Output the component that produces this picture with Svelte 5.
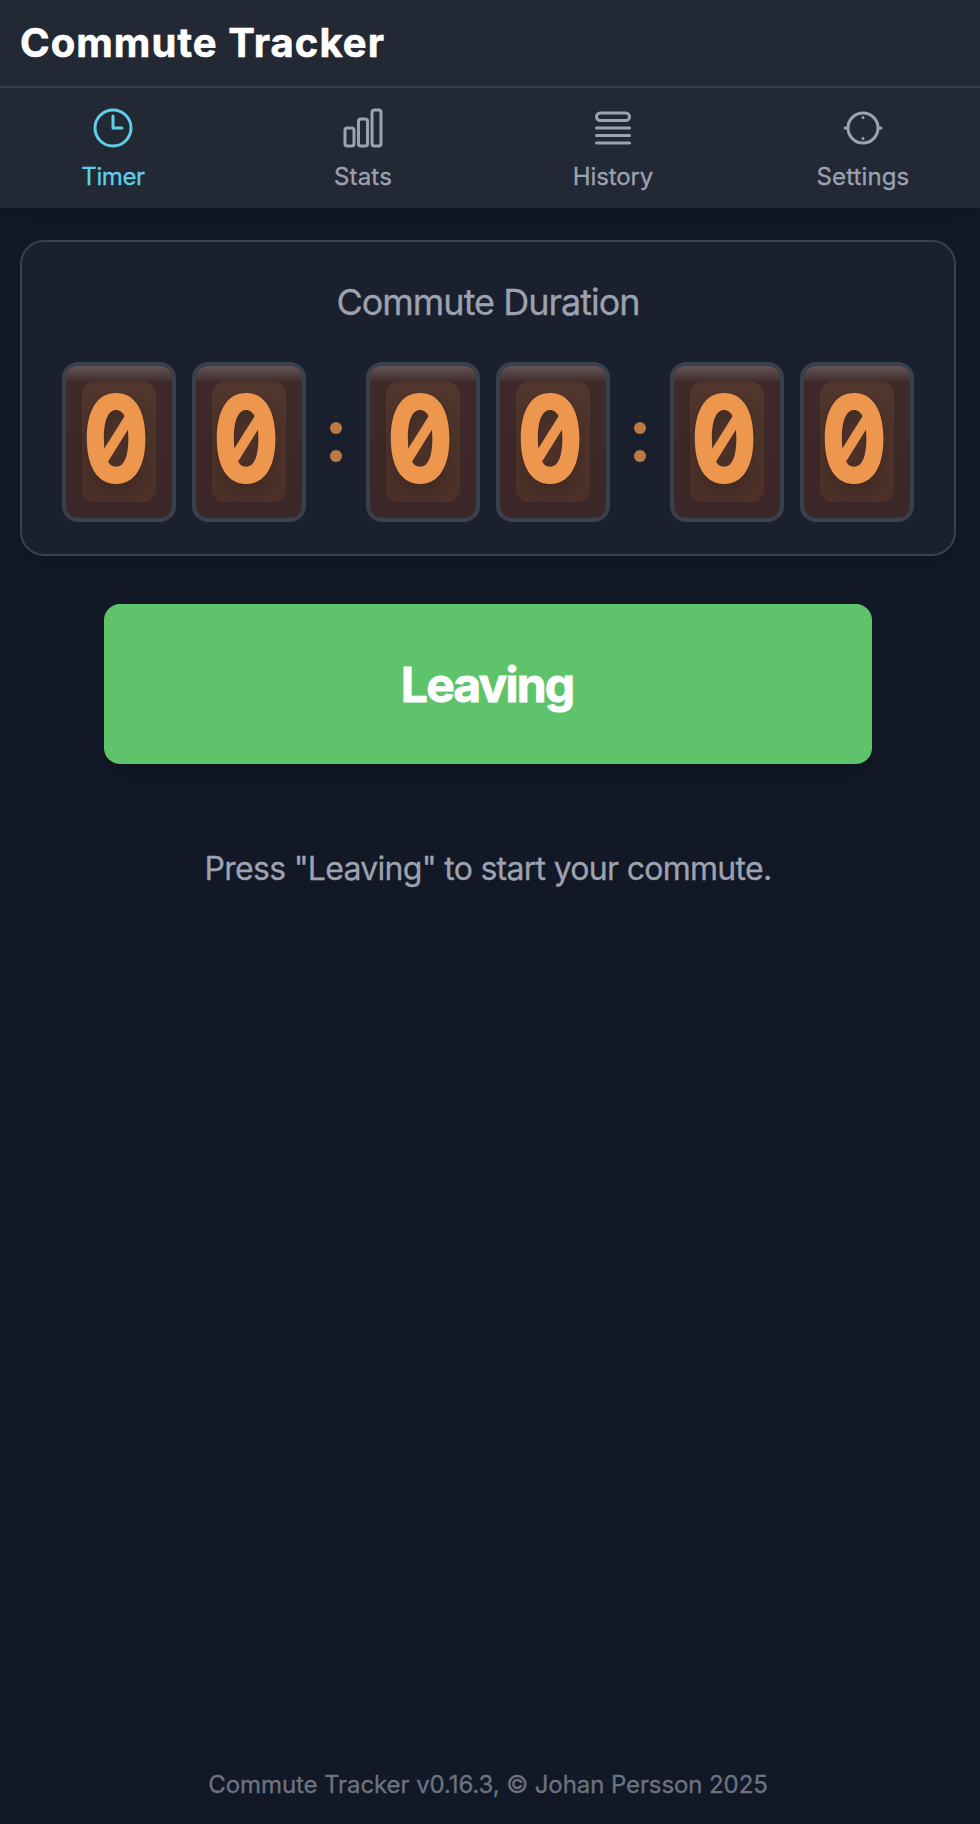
<script>
  const tabs = [
    { name: 'Timer', ls: -0.4, active: true, d: 'M12 6v6h4.5m4.5 0a9 9 0 1 1-18 0 9 9 0 0 1 18 0z' },
    { name: 'Stats', ls: 0.2, d: 'M3 13.125C3 12.504 3.504 12 4.125 12h2.25c.621 0 1.125.504 1.125 1.125v6.75C7.5 20.496 6.996 21 6.375 21h-2.25A1.125 1.125 0 0 1 3 19.875v-6.75zM9.75 8.625c0-.621.504-1.125 1.125-1.125h2.25c.621 0 1.125.504 1.125 1.125v11.25c0 .621-.504 1.125-1.125 1.125h-2.25a1.125 1.125 0 0 1-1.125-1.125V8.625zM16.5 4.125c0-.621.504-1.125 1.125-1.125h2.25C20.496 3 21 3.504 21 4.125v15.75c0 .621-.504 1.125-1.125 1.125h-2.25a1.125 1.125 0 0 1-1.125-1.125V4.125z' },
    { name: 'History', ls: -0.1, d: 'M3.75 12h16.5m-16.5 3.75h16.5M3.75 19.5h16.5M5.625 4.5h12.75a1.875 1.875 0 0 1 0 3.75H5.625a1.875 1.875 0 0 1 0-3.75z' },
    { name: 'Settings', ls: 0.12, d: 'M4.5 12a7.5 7.5 0 0 0 15 0a7.5 7.5 0 1 0-15 0H3m16.5 0H21M12 6.75v.01M12 17.25v.01' }
  ];
  const groups = [['0', '0'], ['0', '0'], ['0', '0']];
</script>

<div class="page">
  <header><h1>Commute Tracker</h1></header>
  <nav>
    {#each tabs as t}
      <div class="tab" class:active={t.active}>
        <svg viewBox="0 0 24 24"><path d={t.d} /></svg>
        <span style="letter-spacing: {t.ls}px">{t.name}</span>
      </div>
    {/each}
  </nav>
  <main>
    <section class="card">
      <h2>Commute Duration</h2>
      <div class="clock">
        {#each groups as g, i}
          {#if i > 0}<div class="colon"><i></i><i></i></div>{/if}
          <div class="pair">
            {#each g as d}
              <div class="tile"><div class="pane" class:slashed={d === '0'}><span class="num">{d}</span></div></div>
            {/each}
          </div>
        {/each}
      </div>
    </section>
    <button class="go">Leaving</button>
    <p class="hint">Press "Leaving" to start your commute.</p>
  </main>
  <footer class="foot">Commute Tracker v0.16.3, © Johan Persson 2025</footer>
</div>

<style>
  :global(body) { margin: 0; background: #121825; overflow: hidden; }
  .page {
    width: 976px; height: 1824px; display: flex; flex-direction: column;
    font-family: Inter, sans-serif; color: #9ca2af; -webkit-text-stroke: .3px currentColor;
  }
  header, nav { width: 980px; box-sizing: border-box; background: #222834; }
  header { height: 88px; flex: none; border-bottom: 2px solid #3a404d; padding: 19px 20px 0; }
  h1 { margin: 0; width: max-content; font-size: 40px; line-height: 48px; font-weight: 700; color: #fff; letter-spacing: 1.08px; -webkit-text-stroke-width: .6px; }
  nav { height: 120px; flex: none; display: flex; justify-content: center; padding-right: 4px; box-shadow: 0 20px 30px -6px rgba(0, 0, 0, .08), 0 8px 12px -8px rgba(0, 0, 0, .08); }
  .tab { flex: none; width: 250px; display: flex; flex-direction: column; align-items: center; padding-top: 16px; font-size: 24px; line-height: 32px; }
  .tab svg { width: 48px; height: 48px; margin-bottom: 9px; fill: none; stroke: currentColor; stroke-width: 1.5; stroke-linecap: round; stroke-linejoin: round; }
  .active { color: #5fcfea; }
  main { flex: 1; display: flex; flex-direction: column; align-items: center; padding-top: 32px; }
  .card {
    width: 936px; height: 316px; box-sizing: border-box; border: 2px solid #3a404d; border-radius: 24px; background: #1a202d;
    display: flex; flex-direction: column; align-items: center; padding-top: 38px;
    box-shadow: 0 20px 30px -6px rgba(0, 0, 0, .08), 0 8px 12px -8px rgba(0, 0, 0, .08);
  }
  h2 { margin: 0 0 38px; font-size: 36px; line-height: 44px; font-weight: 400; letter-spacing: -1px; }
  .clock { display: flex; align-items: center; }
  .pair { display: flex; gap: 16px; }
  .tile {
    width: 114px; height: 160px; box-sizing: border-box; border: 4px solid #3a404d; border-radius: 16px; padding: 16px;
    background: linear-gradient(rgba(255,255,255,.2), rgba(255,255,255,.02)) 0 0 / 100% 16px no-repeat, linear-gradient(#3d2a29, #3b2727);
  }
  .pane { position: relative; height: 120px; border-radius: 12px; background: linear-gradient(#50362c, #4c3029); display: flex; justify-content: center; align-items: center; }
  .slashed::after {
    content: ''; position: absolute; left: 50%; top: 50%; width: 9.6px; height: 54px; background: #ed974e;
    transform: translate(-50%, -50%) translate(-3px, -3px) rotate(32deg);
  }
  .num { font-size: 122px; line-height: 120px; font-weight: 800; color: #ed974e; transform: translate(-3px, -3px) scaleX(.785); text-shadow: 0 8px 16px rgba(0, 0, 0, .16); -webkit-text-stroke-width: 0; }
  .colon { width: 60px; display: flex; flex-direction: column; align-items: center; gap: 16px; }
  .colon i { width: 12px; height: 12px; border-radius: 50%; background: #bb7a46; }
  .go {
    width: 768px; height: 160px; margin: 48px 0 0; padding: 2px 2px 0 0; border: 0; border-radius: 16px; background: #5fc36b; color: #fff;
    font: 700 48px/56px Inter, sans-serif; letter-spacing: -1.85px; -webkit-text-stroke: .9px #fff; box-shadow: 0 20px 30px -6px rgba(0, 0, 0, .1), 0 8px 12px -8px rgba(0, 0, 0, .1);
  }
  .hint { margin: 85px 0 0; font-size: 32px; line-height: 40px; letter-spacing: -.71px; }
  .foot { text-align: center; height: 55px; font-size: 24px; line-height: 32px; color: #6c7381; letter-spacing: -.09px; }
</style>
